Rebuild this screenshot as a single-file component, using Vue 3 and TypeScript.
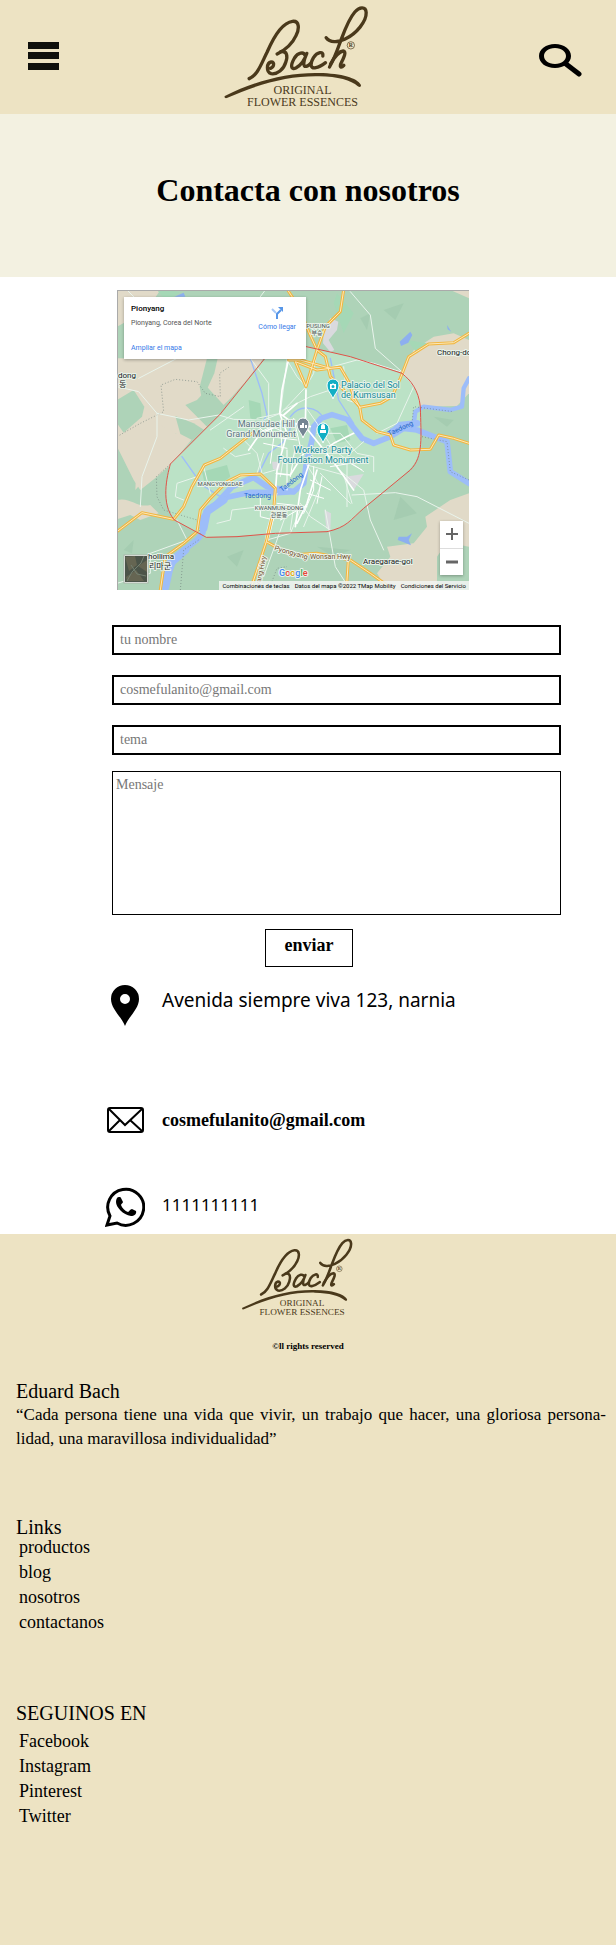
<script setup lang="ts">
import { ref } from 'vue'

interface LinkItem {
  label: string
  href: string
}

const nombre = ref('')
const email = ref('')
const tema = ref('')
const mensaje = ref('')

const links: LinkItem[] = [
  { label: 'productos', href: '#productos' },
  { label: 'blog', href: '#blog' },
  { label: 'nosotros', href: '#nosotros' },
  { label: 'contactanos', href: '#contacto' },
]

const redes: LinkItem[] = [
  { label: 'Facebook', href: '#facebook' },
  { label: 'Instagram', href: '#instagram' },
  { label: 'Pinterest', href: '#pinterest' },
  { label: 'Twitter', href: '#twitter' },
]
</script>

<template>
  <div class="page">
    <svg class="defs" width="0" height="0" aria-hidden="true">
      <symbol id="bach-logo" viewBox="40 10 440 312">
        <g fill="none" stroke="#4a391b" stroke-width="10" stroke-linecap="round" stroke-linejoin="round">
          <path d="M118 234C143 224 154 190 172 154C190 112 218 66 248 62C270 60 268 86 259 104C248 128 226 148 202 160" />
          <path d="M213 153C232 150 234 166 228 184C222 206 202 222 184 219C168 214 170 187 184 184C196 184 192 199 182 203" />
          <path d="M286 165C282 152 264 156 254 172C240 196 244 208 258 202C274 194 286 174 291 158C280 182 278 200 290 197C296 195 300 191 304 187" />
          <path d="M339 166C342 150 322 154 311 171C298 194 304 204 318 201C330 199 339 192 347 186" />
          <path d="M349 111C360 126 384 126 406 115C440 99 470 62 469 36C468 16 448 19 435 34C414 58 402 96 389 130C379 158 370 180 359 199" />
          <path d="M362 190C374 168 390 152 400 151C412 153 400 174 393 189C389 200 394 203 402 194" />
        </g>
        <path fill="#4a391b" d="M45 286C138 240 234 215 327 217C396 218 442 232 453 252C455 259 450 261 444 257C424 239 384 228 328 227C238 225 148 249 51 292C46 294 42 289 45 286Z" />
        <circle cx="423" cy="134" r="11" fill="none" stroke="#4a391b" stroke-width="2" />
        <text x="423" y="140" font-size="17" font-weight="700" text-anchor="middle" class="logo-text">R</text>
        <text x="278" y="281" font-size="36" text-anchor="middle" class="logo-text">ORIGINAL</text>
        <text x="278" y="315" font-size="36" text-anchor="middle" class="logo-text">FLOWER ESSENCES</text>
      </symbol>
      <g id="vias">
        <path d="M0 725L75 668L170 688L200 650L225 590L262 525L310 505L405 430" />
        <path d="M130 900L145 800L200 760L240 725L250 660L280 625L330 575L370 555L430 552L475 595L470 660L448 755L400 900" />
        <path d="M448 755L520 795L600 790L700 810L760 850L830 900M694 810L688 900" />
        <path d="M512 0L545 50L575 125L600 180L625 200L640 260L690 310L728 350L735 390L780 425L820 435L830 465L880 480L940 478L965 435L1010 445L1056 460" />
        <path d="M1056 130L1010 158L935 162L875 200L850 265L825 320L790 340L728 352" />
        <path d="M680 0L670 65L625 110L600 180L567 290L535 215L600 240L640 235L670 232L695 275L710 320L728 352" />
        <path d="M515 210H550L640 235" />
      </g>
    </svg>

    <header class="topbar">
      <button class="icon-btn" type="button" aria-label="Abrir menú">
        <svg width="31" height="28" viewBox="0 0 31 28" fill="#0f100c">
          <rect width="31" height="7" />
          <rect y="10" width="31" height="7" />
          <rect y="21" width="31" height="7" />
        </svg>
      </button>
      <a class="brand" href="#inicio" aria-label="Bach">
        <svg width="147" height="104"><use href="#bach-logo" /></svg>
      </a>
      <button class="icon-btn search" type="button" aria-label="Buscar">
        <svg width="44" height="34" viewBox="0 0 44 34" fill="none" stroke="#000">
          <path fill="#000" stroke="none" fill-rule="evenodd" d="M17 1C26 1 33 6 33 13S26 25 17 25S1 20 1 13S8 1 17 1ZM17 5C10 5 6 9 6 13S10 21 17 21S28 17 28 13S24 5 17 5Z" />
          <path d="M28 21L41 31" stroke-width="5" stroke-linecap="round" />
        </svg>
      </button>
    </header>

    <section class="hero">
      <h1>Contacta con nosotros</h1>
    </section>

    <main class="content">
      <div class="map">
        <svg class="terrain" viewBox="0 0 1056 900" preserveAspectRatio="none" aria-hidden="true">
          <rect width="1056" height="900" fill="#aed3b8" />
          <g fill="#e1dac8">
            <path d="M0 0H130L90 60L0 110Z" />
            <path d="M0 205H440L385 275L345 320L320 345L265 285L210 225L150 260L110 250L75 300L62 345L110 400L55 470L0 400Z" />
            <path d="M100 200H250L268 300L240 330L205 345L270 410L225 450L175 430L120 470L90 560L55 600L60 480L20 430L0 400V290L120 210Z" />
            <path d="M0 395C40 390 60 410 105 390L175 430L240 430L165 520L120 560L70 600L50 570L10 490L0 470Z" />
            <path d="M860 240L890 180L950 140L1010 130L1056 150V310L1020 348L900 350L870 290Z" />
            <path d="M0 630C40 620 60 655 100 645L125 670L70 690L40 675L0 688Z" />
            <path d="M1056 610V900H810L780 850L820 800L810 770L890 760L930 710L925 680L1000 630Z" />
            <path d="M1000 0H1056V25Z" />
          </g>
          <g fill="#aed3b8">
            <path d="M270 205H302L292 250L255 330L248 290Z" />
            <path d="M175 378L230 400L270 425L225 450L190 432Z" />
            <path d="M0 330L50 300L82 350L75 380L20 428L0 400Z" />
            <path d="M960 800C990 750 1030 765 1056 770V900H960Z" />
          </g>
          <path d="M442 205L568 168L600 177L700 200L855 250C905 280 910 340 913 400V480C900 540 800 600 740 655C690 710 670 725 570 728L268 742L172 690C130 640 150 560 160 522L310 372Z" fill="#bbe2c6" />
          <g fill="#a5d8b6">
            <path d="M120 0L190 5L150 35ZM660 10L710 70L680 130L650 40ZM870 150L930 160L900 190Z" />
            <path d="M255 545L330 525L340 560L300 590L262 575ZM640 415L690 405L700 450L660 460ZM395 330L430 340L435 400L400 385Z" />
          </g>
          <g fill="#9fc8ab" opacity=".6">
            <path d="M730 85L760 70L750 120ZM800 60L860 40L835 90ZM20 780L50 750L45 790ZM330 800L380 780L360 830ZM600 770L700 780L650 800ZM850 620L900 670L830 690ZM950 380L1010 390L990 410Z" />
          </g>
          <g fill="#dadade">
            <path d="M640 84L664 95L660 120L635 150L652 180L640 186L618 160L620 125ZM685 560L740 552L712 598ZM622 660L642 670L640 722L628 715ZM465 515L490 515L488 540L468 538Z" />
          </g>
          <g fill="none" stroke="#9dbdf9" stroke-linejoin="round" stroke-linecap="round">
            <path d="M145 900L155 850L175 800L240 750L258 728L255 690L275 655L330 622L400 607L480 608L530 605L560 580L568 520L585 450L590 410L612 385L645 374L690 388L735 445L770 460L820 440L860 415L900 420L950 440L990 455L1000 545L1056 580" stroke-width="17" />
            <path d="M290 650L345 590L410 562L450 590L530 605" stroke-width="18" />
            <path d="M825 420L890 405L895 365L920 350L1000 360L1035 350L1040 295L1056 265" stroke-width="13" />
            <path d="M818 435L850 405L900 400" stroke-width="20" />
            <path d="M145 890L160 820L205 780" stroke-width="24" />
            <path d="M260 715L270 665L320 630" stroke-width="23" />
            <path d="M425 550L455 490L500 455L520 415M400 205L435 310L450 375L440 390M195 500L255 585L310 620M640 205L665 330L710 400M520 380C550 340 600 350 620 385" stroke-width="4" />
          </g>
          <g fill="#8dafef">
            <path d="M172 20L200 8L205 20H175ZM848 155L880 125L886 135L874 158L852 168ZM990 105L1003 125L992 118ZM845 740L870 740L885 730L875 750L882 766L858 756L842 750Z" />
          </g>
          <g fill="none" stroke="#6f817b" stroke-width="2" stroke-dasharray="3 6">
            <path d="M0 440L70 400L140 365L132 285L175 268L240 275L265 310L310 320L308 250L335 232M160 522L118 560L120 620L140 660L240 690L250 735M190 900L200 780L245 750M915 440L990 455L1000 545L1056 570M820 430L885 400L890 350L1010 365M455 900L480 835L510 830" />
          </g>
          <g fill="none" stroke="#fff" stroke-linejoin="round" stroke-linecap="round">
            <g stroke="#e9f4ec" stroke-width="3">
              <path d="M0 290L65 305L120 370L215 390L305 375L350 388L440 390L490 370L510 210M700 5L760 75L775 175L860 250M30 0L70 40M445 0L430 20M65 265L180 205M120 370L120 440L75 560L70 650M705 615L835 608L900 620L1056 700M660 535L740 600L760 690L800 780M180 690L210 750L100 790L100 850L0 880M400 205L455 280L455 390M625 660L655 830L700 900M860 250L890 290L840 400L780 430M480 610L450 720L420 900M450 750L520 730L550 660" />
              <path d="M510 210L540 260L567 290L565 350L600 400L650 480L740 545M567 290L520 340L490 370L420 385M500 360L580 320L640 300M600 180L590 250L567 290M680 230L690 330L720 340M610 240L720 210L770 220L850 245M590 490L700 490L740 455M570 525L680 555L705 640M570 525L610 590L560 710M610 550L660 600L700 640M440 490L420 550L350 565M380 450L420 490L435 550M320 475L355 500L400 490M475 540L440 550M500 500L490 560M260 530L280 610M240 560L180 580L175 620L200 630M280 420L380 350M300 700L340 690L345 660L430 650M515 650L480 750L440 860M530 650L520 720M550 640L580 680L640 720M690 500L690 650M600 430L670 430L720 490L770 500L770 545" />
            </g>
            <g stroke-width="5">
              <path d="M513 215L495 300L488 370L510 430L480 540L470 680L450 760M488 370L530 400L580 410M490 405L430 430L395 480M567 300L565 410L605 460L660 530L710 600M540 340L500 375M478 550L520 555L560 490M575 525L550 600L535 710M600 540L570 640L540 700M605 490L650 460L710 430" />
            </g>
            <g stroke-width="3">
              <path d="M405 395L460 440L540 450M420 430L465 410L520 435M440 460L510 475M455 390L470 445L460 520M490 390L495 480M530 385L550 470M510 480L510 600M535 470L520 560M590 530L590 600L560 670M615 560L600 640M640 530L700 520L735 540M580 570L640 600M570 610L620 625M480 640L570 650M490 690L560 650M430 620L430 680L470 690" />
            </g>
          </g>
          <g fill="none" stroke-linejoin="round" stroke-linecap="round">
            <use href="#vias" stroke="#f2b63f" stroke-width="9" />
            <use href="#vias" stroke="#fbe9bb" stroke-width="3" />
            <path d="M442 207L310 372L160 522C150 560 130 640 172 690L268 742L360 740L475 730L630 725C690 712 700 690 740 655L880 540C920 500 912 440 910 350C905 300 880 270 855 250L700 200L600 177L568 170" stroke="#e05349" stroke-width="3" />
          </g>
          <path d="M0 1H1056M1 0V900" fill="none" stroke="#aaa" stroke-width="4" />
        </svg>

        <svg class="labels" viewBox="0 0 352 300" aria-hidden="true">
          <g class="pins" stroke="#fff" stroke-width="1">
            <path fill="#12afc4" d="M216 109C214 103 210 101 210 95A6 6 0 0 1 222 95C222 101 218 103 216 109Z" />
            <path fill="#748593" d="M186 148C184 142 180 140 180 134A6 6 0 0 1 192 134C192 140 188 142 186 148Z" />
            <path fill="#12afc4" d="M206 153C204 147 200 145 200 139A6 6 0 0 1 212 139C212 145 208 147 206 153Z" />
          </g>
          <g fill="#fff">
            <path fill-rule="evenodd" d="M213 94H215L216 93L217 94H219V99H213ZM216 95A1 1 0 0 0 216 98A1 1 0 0 0 216 95Z" />
            <path d="M183 138V135H185V133H187V138ZM188 138V135H190V138ZM204 136A2 2 0 0 1 208 136V139H204ZM203 140H209V143H203Z" />
          </g>
          <g class="place" font-size="9">
            <text x="224" y="98">Palacio del Sol</text>
            <text x="224" y="108">de Kumsusan</text>
            <text x="206" y="163" text-anchor="middle">Workers' Party</text>
            <text x="206" y="173" text-anchor="middle">Foundation Monument</text>
          </g>
          <g class="place grey" font-size="9" text-anchor="end">
            <text x="178" y="137">Mansudae Hill</text>
            <text x="179" y="147">Grand Monument</text>
          </g>
          <g class="town" font-size="8">
            <text x="1" y="88">dong</text>
            <text x="2" y="97">동</text>
            <text x="320" y="65">Chong-dong</text>
            <text x="31" y="269">hollima</text>
            <text x="32" y="279">리마군</text>
            <text x="246" y="274">Araegarae-gol</text>
          </g>
          <g class="district" font-size="6" text-anchor="middle">
            <text x="201" y="38">PUSUNG</text>
            <text x="200" y="45">부승</text>
            <text x="103" y="196">MANGYONGDAE</text>
            <text x="162" y="220">KWANMUN-DONG</text>
            <text x="162" y="227">관문동</text>
          </g>
          <g class="river" font-size="7">
            <text x="127" y="208">Taedong</text>
            <text transform="translate(165 202) rotate(-38)">Taedong</text>
            <text transform="translate(272 146) rotate(-24)">Taedong</text>
          </g>
          <g class="road" font-size="7">
            <text transform="translate(157 260) rotate(16)">Pyongyang</text>
            <text x="193" y="269">Wonsan Hwy</text>
            <text transform="translate(143 296) rotate(-78)">yang Hwy</text>
          </g>
          <text class="google" x="162" y="286" font-size="9">
            <tspan fill="#4285f4">G</tspan><tspan fill="#ea4335">o</tspan><tspan fill="#e8a900">o</tspan><tspan fill="#4285f4">g</tspan><tspan fill="#34a853">l</tspan><tspan fill="#ea4335">e</tspan>
          </text>
          <g>
            <rect x="7" y="265" width="24" height="28" fill="#fff" stroke="#aab5a9" />
            <rect x="8" y="266" width="22" height="26" fill="#4b5449" />
            <path d="M8 267L18 266L20 275L12 281ZM21 276L30 270V282ZM9 287L19 280L27 291H10Z" fill="#656552" />
            <path d="M10 291L15 282L24 273L27 266M14 275L20 284L29 286" fill="none" stroke="#738071" />
          </g>
        </svg>

        <div class="map-card">
          <div class="map-place">
            <strong>Pionyang</strong>
            <span>Pionyang, Corea del Norte</span>
            <a href="#mapa">Ampliar el mapa</a>
          </div>
          <a class="directions" href="#ruta">
            <svg width="12" height="12" viewBox="0 0 12 12" fill="none">
              <path d="M1 2L5 6" stroke="#a8c9f7" stroke-width="2" />
              <path d="M6 12V7L10 3" stroke="#5796e8" stroke-width="2" />
              <path d="M7 0H12V5Z" fill="#5796e8" />
            </svg>
            <span>Cómo llegar</span>
          </a>
        </div>

        <div class="zoom">
          <button type="button" aria-label="Acercar">
            <svg width="12" height="12" viewBox="0 0 12 12"><path d="M0 6H12M6 0V12" stroke="#666" stroke-width="2" /></svg>
          </button>
          <button type="button" aria-label="Alejar">
            <svg width="12" height="12" viewBox="0 0 12 12"><path d="M0 6H12" stroke="#666" stroke-width="3" /></svg>
          </button>
        </div>

        <div class="credits">
          <span>Combinaciones de teclas</span>
          <span>Datos del mapa ©2022 TMap Mobility</span>
          <span>Condiciones del Servicio</span>
        </div>
      </div>

      <form class="form" @submit.prevent>
        <input v-model="nombre" type="text" aria-label="Nombre" placeholder="tu nombre" />
        <input v-model="email" type="email" aria-label="Correo" placeholder="cosmefulanito@gmail.com" />
        <input v-model="tema" type="text" aria-label="Tema" placeholder="tema" />
        <textarea v-model="mensaje" aria-label="Mensaje" placeholder="Mensaje"></textarea>
        <button type="submit">enviar</button>
      </form>

      <ul class="contact">
        <li>
          <svg width="40" height="42" viewBox="0 0 40 42">
            <path fill-rule="evenodd" d="M20 41C16 31 6 24 6 14A14 14 0 0 1 34 14C34 24 24 31 20 41ZM20 9A5 5 0 0 0 20 19A5 5 0 0 0 20 9Z" />
          </svg>
          <span class="sans address">Avenida siempre viva 123, narnia</span>
        </li>
        <li>
          <svg width="40" height="42" viewBox="0 0 40 42" fill="none" stroke="#000" stroke-width="2">
            <rect x="3" y="9" width="35" height="24" rx="2" />
            <path d="M4 10L20 26L37 10M4 32L15 21M37 32L25 21" />
          </svg>
          <span class="mail">cosmefulanito@gmail.com</span>
        </li>
        <li>
          <svg width="40" height="42" viewBox="0 0 40 42">
            <path d="M5 30A18 18 0 1 1 12 37L2 39Z" fill="none" stroke="#000" stroke-width="3" />
            <path d="M14 11C15 11 16 11 16 12L18 16C18 17 16 18 16 19C17 22 20 25 23 26C24 26 25 23 27 23L31 25C32 28 29 30 26 30C18 29 11 21 11 16C11 13 12 11 14 11Z" />
          </svg>
          <span class="sans phone">1111111111</span>
        </li>
      </ul>
    </main>

    <footer class="footer">
      <div class="footer-logo">
        <svg width="113" height="80"><use href="#bach-logo" /></svg>
      </div>
      <p class="rights">©ll rights reserved</p>

      <section class="about">
        <h2>Eduard Bach</h2>
        <p>“Cada persona tiene una vida que vivir, un trabajo que hacer, una gloriosa persona&shy;lidad, una maravillosa individualidad”</p>
      </section>

      <nav class="links" aria-label="Links">
        <h2>Links</h2>
        <ul>
          <li v-for="link in links" :key="link.label"><a :href="link.href">{{ link.label }}</a></li>
        </ul>
      </nav>

      <nav class="social" aria-label="Redes">
        <h2>SEGUINOS EN</h2>
        <ul>
          <li v-for="red in redes" :key="red.label"><a :href="red.href">{{ red.label }}</a></li>
        </ul>
      </nav>
    </footer>
  </div>
</template>

<style>
body {
  margin: 0;
  background: #fff;
}
</style>

<style scoped>
.page {
  font-family: "Liberation Serif", "Times New Roman", serif;
  color: #000;
}

.page *,
.page {
  box-sizing: border-box;
}

h1,
h2,
p,
ul {
  margin: 0;
  padding: 0;
  font-weight: 400;
}

ul {
  list-style: none;
}

a {
  color: inherit;
  text-decoration: none;
}

svg {
  display: block;
  flex: none;
}

.defs {
  position: absolute;
}

.logo-text {
  font-family: "Liberation Serif", serif;
  fill: #4a391b;
}

.topbar {
  display: flex;
  align-items: center;
  justify-content: space-between;
  height: 114px;
  padding: 0 34px 2px 28px;
  background: #ede3c3;
}

.brand {
  margin-right: 4px;
}

.icon-btn {
  padding: 0;
  border: 0;
  background: none;
  cursor: pointer;
}

.search {
  padding-top: 8px;
}

.hero {
  display: flex;
  align-items: center;
  justify-content: center;
  height: 163px;
  padding-bottom: 12px;
  background: #f3f1e1;
}

.hero h1 {
  font-size: 32px;
  font-weight: 700;
  line-height: 36px;
}

.content {
  padding: 13px 55px 6px 112px;
}

.map {
  position: relative;
  max-width: 352px;
  margin-left: 5px;
  aspect-ratio: 352 / 300;
  overflow: hidden;
  font-family: Roboto, "Noto Sans CJK KR", sans-serif;
}

.terrain,
.labels {
  position: absolute;
  inset: 0;
  width: 100%;
  height: 100%;
}

.labels text {
  font-family: Roboto, "Noto Sans CJK KR", sans-serif;
  paint-order: stroke;
  stroke: #e8f3ea;
  stroke-width: 2px;
  stroke-linejoin: round;
}

.place {
  fill: #128a99;
}

.place.grey {
  fill: #5c7480;
}

.town {
  fill: #222;
}

.district {
  fill: #4c5354;
}

.labels .river text {
  fill: #1f67cf;
  stroke: none;
}

.road {
  fill: #74512b;
}

.labels .google {
  font-weight: 500;
}

.map-card {
  position: absolute;
  top: 7px;
  left: 7px;
  display: flex;
  justify-content: space-between;
  width: 182px;
  height: 62px;
  padding: 6px 10px 5px 7px;
  background: #fff;
  box-shadow: 0 1px 3px rgba(0, 0, 0, 0.3);
  font-size: 7px;
  line-height: 12px;
}

.map-place {
  display: flex;
  flex-direction: column;
}

.map-place strong {
  margin-bottom: 2px;
  font-size: 8px;
  font-weight: 500;
}

.map-place span {
  color: #555;
}

.map-place a {
  margin-top: auto;
}

.map-card a {
  color: #3479e8;
}

.directions {
  display: flex;
  flex-direction: column;
  align-items: center;
  gap: 2px;
  padding-top: 4px;
}

.zoom {
  position: absolute;
  right: 6px;
  bottom: 15px;
  display: flex;
  flex-direction: column;
  width: 23px;
  height: 54px;
  background: #fff;
  box-shadow: 0 1px 3px rgba(0, 0, 0, 0.3);
}

.zoom button {
  display: flex;
  flex: 1;
  align-items: center;
  justify-content: center;
  padding: 0;
  border: 0;
  background: none;
}

.zoom button + button {
  border-top: 1px solid #ddd;
}

.credits {
  position: absolute;
  right: 0;
  bottom: 0;
  display: flex;
  gap: 5px;
  padding: 0 3px;
  background: rgba(242, 245, 242, 0.85);
  font-size: 6px;
  line-height: 9px;
  white-space: nowrap;
}

.form {
  display: flex;
  flex-direction: column;
  gap: 20px;
  margin-top: 35px;
}

.form input,
.form textarea {
  width: 100%;
  border: 2px solid #000;
  border-radius: 0;
  outline: 0;
  background: #fff;
  color: #000;
  font-family: inherit;
  font-size: 14px;
  line-height: 20px;
}

.form input {
  height: 30px;
  padding: 2px 6px;
}

.form textarea {
  display: block;
  height: 144px;
  margin-top: -4px;
  padding: 3px;
  border-width: 1px;
  resize: none;
}

.form ::placeholder {
  color: #777;
  opacity: 1;
}

.form button {
  align-self: center;
  width: 88px;
  height: 38px;
  margin: -6px 55px 0 0;
  padding: 0 0 6px;
  border: 1px solid #000;
  background: #fff;
  color: #000;
  font-family: inherit;
  font-size: 18px;
  font-weight: 700;
}

.contact {
  margin: 18px 0 0 -7px;
}

.contact li {
  display: flex;
  align-items: center;
  gap: 17px;
  height: 42px;
}

.contact li + li {
  margin-top: 72px;
}

.contact li:last-child {
  margin-top: 45px;
}

.sans {
  font-family: "Noto Sans", sans-serif;
}

.address {
  padding-bottom: 12px;
  font-size: 19px;
}

.phone {
  padding-bottom: 6px;
  font-size: 17px;
}

.mail {
  font-size: 18px;
  font-weight: 700;
}

.footer {
  padding: 3px 10px 116px 16px;
  background: #ede3c3;
}

.footer-logo {
  display: flex;
  justify-content: center;
  padding-right: 28px;
}

.rights {
  margin: 23px 6px 0 0;
  font-size: 9px;
  font-weight: 700;
  line-height: 12px;
  text-align: center;
}

.footer h2 {
  font-size: 20px;
  line-height: 16px;
}

.about {
  margin-top: 31px;
}

.about p {
  margin-top: 4px;
  font-size: 17px;
  line-height: 24px;
  text-align: justify;
}

.links {
  margin-top: 68px;
}

.links ul,
.social ul {
  padding-left: 3px;
  font-size: 18px;
  line-height: 25px;
}

.social {
  margin-top: 70px;
}

.social ul {
  margin-top: 8px;
}
</style>
